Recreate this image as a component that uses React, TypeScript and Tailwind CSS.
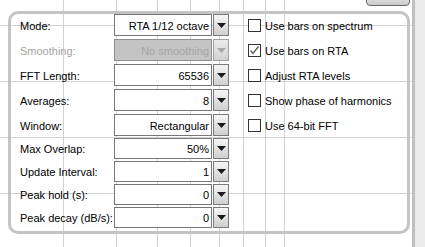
import React from "react";

const Arrow = ({ disabled }: { disabled?: boolean }) => (
  <svg width="9" height="5" viewBox="0 0 9 5">
    <polygon points="0,0 9,0 4.5,5" fill={disabled ? "#a8a8a8" : "#1a1a1a"} />
  </svg>
);

type RowProps = { label: string; value: string; h: string; disabled?: boolean };

const Row = ({ label, value, h, disabled }: RowProps) => (
  <div className={`flex items-center ${h}`}>
    <div className={`w-[94px] pt-[2px] whitespace-nowrap ${disabled ? "text-[#a3a3a3]" : "text-black"}`}>{label}</div>
    <div
      className={`w-[98px] h-full flex items-center justify-end pr-[2px] pt-[2px] border ${
        disabled ? "bg-[#c4c4c4] border-[#8e8e8e] text-[#a6a6a6]" : "bg-white border-[#777777] text-black"
      }`}
    >
      {value}
    </div>
    <div
      className={`ml-[1px] w-[16px] h-full flex items-center justify-center border ${
        disabled
          ? "border-[#a0a0a0] bg-gradient-to-b from-[#ececec] to-[#d2d2d2]"
          : "border-[#7a7a7a] bg-gradient-to-b from-[#f6f6f6] to-[#cfcfcf]"
      }`}
    >
      <Arrow disabled={disabled} />
    </div>
  </div>
);

const Check = ({ label, checked }: { label: string; checked?: boolean }) => (
  <div className="flex items-center h-[22px]">
    <div className="w-[13px] h-[13px] border border-[#333333] bg-white flex items-center justify-center">
      {checked && (
        <svg width="11" height="11" viewBox="0 0 11 11">
          <polyline points="1.5,5.5 4,8.5 9.5,1.5" fill="none" stroke="#5a5a5a" strokeWidth="1.3" />
        </svg>
      )}
    </div>
    <div className="ml-[4px] pt-[2px] whitespace-nowrap text-black">{label}</div>
  </div>
);

export default function App() {
  const vx = [63, 116, 157, 190, 219, 243, 265, 284];
  const hy = [25, 81, 137, 193];
  return (
    <div className="w-[425px] h-[247px] flex bg-white overflow-hidden font-['Liberation_Sans',Arial,sans-serif] text-[11px] leading-none">
      <div className="relative w-[412px] h-full">
        <svg className="absolute left-0 top-0" width="412" height="247">
          {vx.map((x) => (
            <line key={"v" + x} x1={x + 0.5} y1={0} x2={x + 0.5} y2={247} stroke="#d2d2d2" strokeWidth="1" />
          ))}
          {hy.map((y) => (
            <line key={"h" + y} x1={0} y1={y + 0.5} x2={412} y2={y + 0.5} stroke="#d2d2d2" strokeWidth="1" />
          ))}
        </svg>
        <div className="absolute left-[366px] top-[-6px] w-[44px] h-[12px] border border-[#6c6c6c] rounded-b-[4px] bg-gradient-to-b from-[#ededed] to-[#c8c8c8]" />
        <div className="relative ml-[8px] mt-[11px] w-[402px] h-[223px] border-[3px] border-[#c4c4c4] rounded-[10px] flex pt-[0px] pl-[9px]">
          <div className="flex flex-col w-[209px]">
            <div className="flex flex-col gap-[3px]">
              <Row label="Mode:" value="RTA 1/12 octave" h="h-[22px]" />
              <Row label="Smoothing:" value="No smoothing" h="h-[22px]" disabled />
              <Row label="FFT Length:" value="65536" h="h-[22px]" />
              <Row label="Averages:" value="8" h="h-[22px]" />
              <Row label="Window:" value="Rectangular" h="h-[22px]" />
            </div>
            <div className="flex flex-col gap-[2px] mt-[2px]">
              <Row label="Max Overlap:" value="50%" h="h-[21px]" />
              <Row label="Update Interval:" value="1" h="h-[21px]" />
              <Row label="Peak hold (s):" value="0" h="h-[21px]" />
              <Row label="Peak decay (dB/s):" value="0" h="h-[21px]" />
            </div>
          </div>
          <div className="ml-[19px] flex flex-col gap-[3px]">
            <Check label="Use bars on spectrum" />
            <Check label="Use bars on RTA" checked />
            <Check label="Adjust RTA levels" />
            <Check label="Show phase of harmonics" />
            <Check label="Use 64-bit FFT" />
          </div>
        </div>
      </div>
      <div className="w-[13px] h-full border-l-[3px] border-[#c0c0c0] bg-[#ebebeb]" />
    </div>
  );
}
